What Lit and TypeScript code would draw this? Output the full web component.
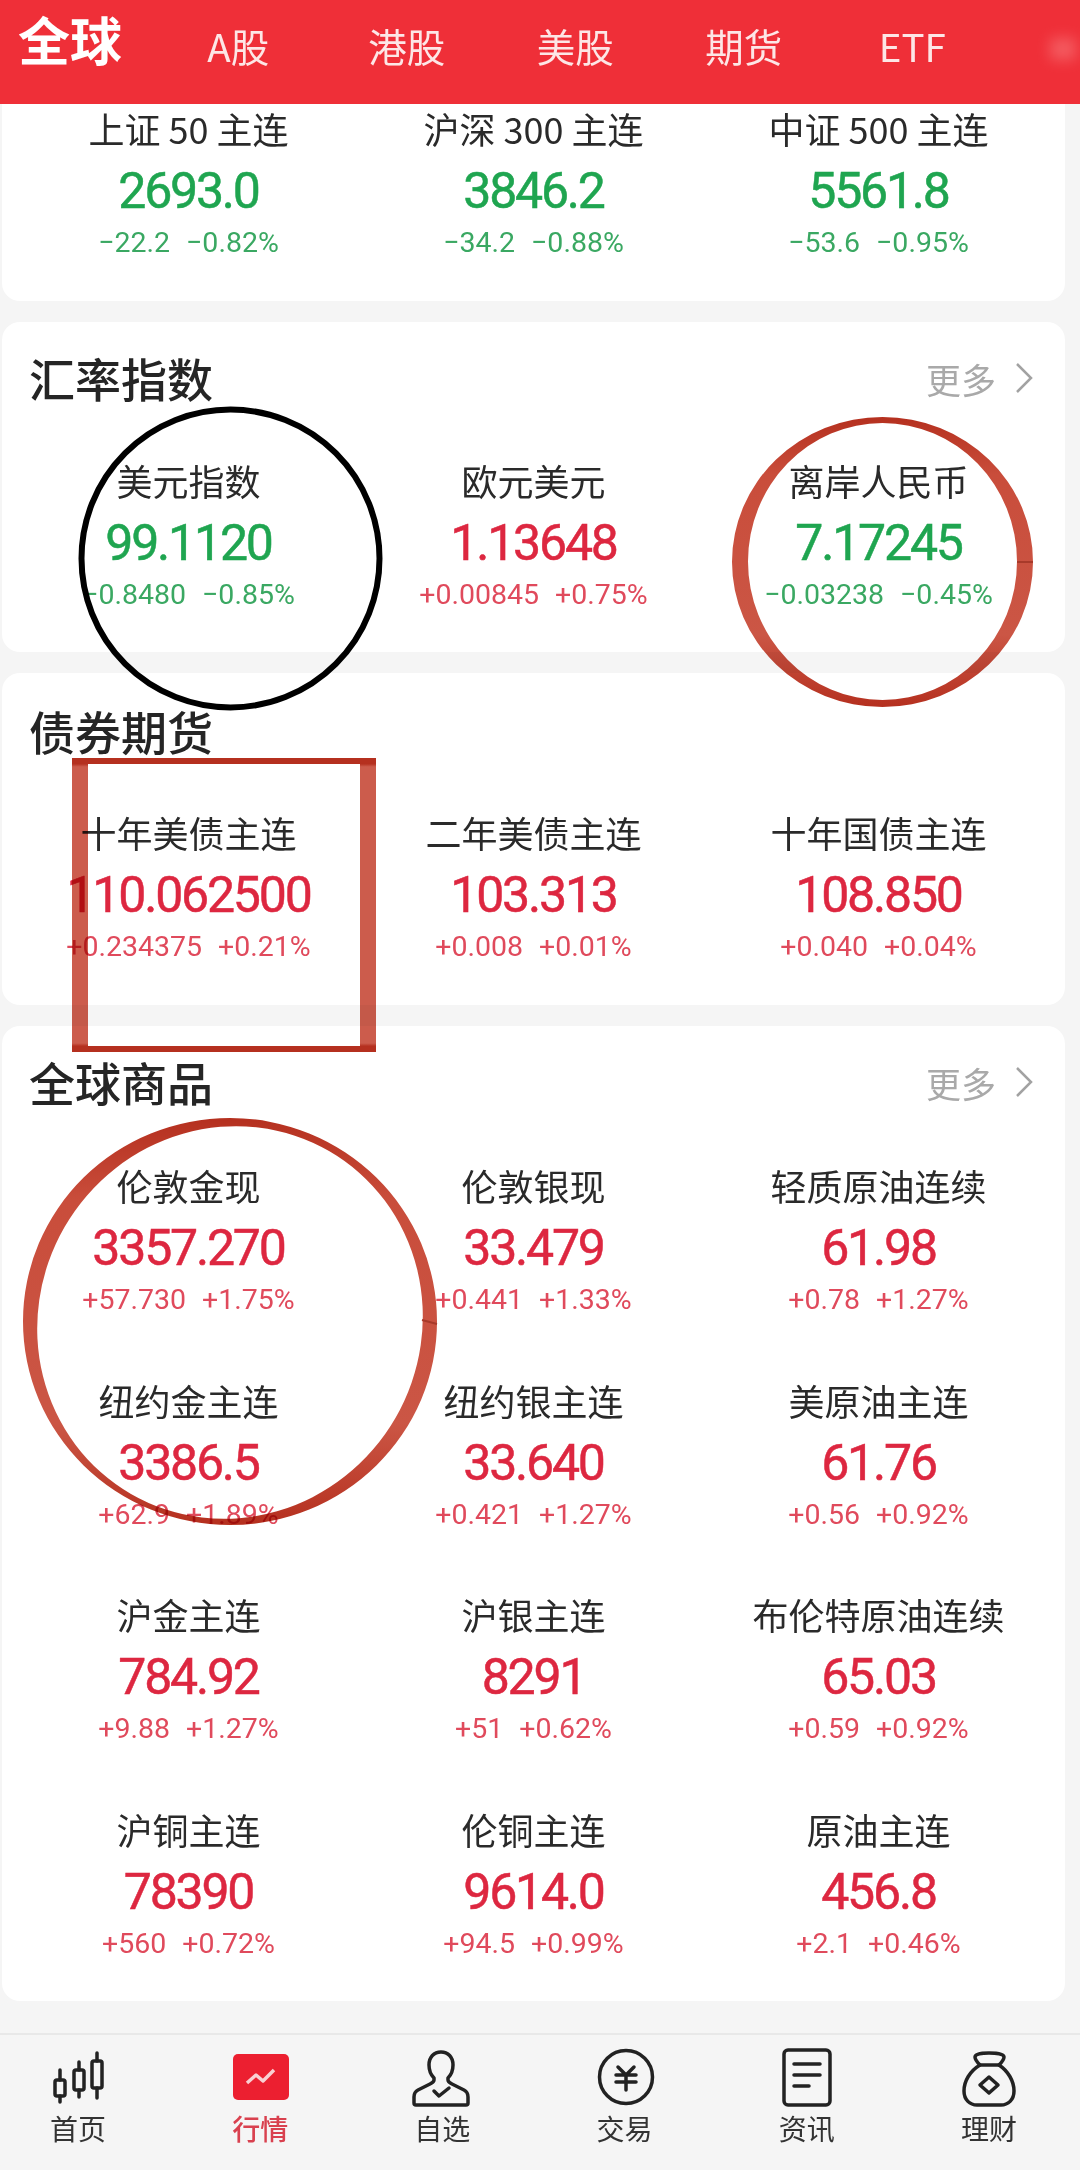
import { LitElement, html, css, svg } from "lit";
import { customElement } from "lit/decorators.js";

type Q = [string, string, string, string];

const futures: Q[] = [
  ["上证 50 主连", "2693.0", "−22.2", "−0.82%"],
  ["沪深 300 主连", "3846.2", "−34.2", "−0.88%"],
  ["中证 500 主连", "5561.8", "−53.6", "−0.95%"],
];
const fx: Q[] = [
  ["美元指数", "99.1120", "−0.8480", "−0.85%"],
  ["欧元美元", "1.13648", "+0.00845", "+0.75%"],
  ["离岸人民币", "7.17245", "−0.03238", "−0.45%"],
];
const bonds: Q[] = [
  ["十年美债主连", "110.062500", "+0.234375", "+0.21%"],
  ["二年美债主连", "103.313", "+0.008", "+0.01%"],
  ["十年国债主连", "108.850", "+0.040", "+0.04%"],
];
const goods: Q[] = [
  ["伦敦金现", "3357.270", "+57.730", "+1.75%"],
  ["伦敦银现", "33.479", "+0.441", "+1.33%"],
  ["轻质原油连续", "61.98", "+0.78", "+1.27%"],
  ["纽约金主连", "3386.5", "+62.9", "+1.89%"],
  ["纽约银主连", "33.640", "+0.421", "+1.27%"],
  ["美原油主连", "61.76", "+0.56", "+0.92%"],
  ["沪金主连", "784.92", "+9.88", "+1.27%"],
  ["沪银主连", "8291", "+51", "+0.62%"],
  ["布伦特原油连续", "65.03", "+0.59", "+0.92%"],
  ["沪铜主连", "78390", "+560", "+0.72%"],
  ["伦铜主连", "9614.0", "+94.5", "+0.99%"],
  ["原油主连", "456.8", "+2.1", "+0.46%"],
];

const icons = {
  home: svg`<path d="M12 22v10M12 48v6M31 14v8M31 42v7M49 5v8M49 40v10"/><rect x="7" y="32" width="10" height="16" rx="2"/><rect x="26" y="22" width="10" height="20" rx="2"/><rect x="44" y="13" width="10" height="27" rx="2"/>`,
  market: svg`<rect class="fill" x="3" y="6" width="56" height="46" rx="5"/><path class="spark" d="M17 35l9-8 7 6 11-11"/>`,
  person: svg`<path d="M29 4c-7 0-12 5-12 13 0 6 2 10 5 13v2c0 2-2 3-4 4l-12 6c-3 1.500-4 4-4 7v6q0 2 2 2h50q2 0 2-2v-6c0-3-1-5.500-4-7l-12-6c-2-1-4-2-4-4v-2c3-3 5-7 5-13 0-8-5-13-12-13z"/><path d="M22 43l5 5 10-8"/>`,
  trade: svg`<circle cx="31" cy="29" r="26.500"/><path d="M23 19l8 8 8-8M21 27h20M21 34h20M31 27v15"/>`,
  news: svg`<rect x="7" y="2" width="46" height="55" rx="4"/><path d="M17 16h26M17 27h26M17 38h15"/>`,
  bag: svg`<path d="M21 17c-3-3-5-5-5-8 0-3 7-4 14-4s15 1 15 4c0 3-2 5-5 8z"/><path d="M21 17C11 23 5 33 5 43c0 9 6 14 13 14h24c7 0 13-5 13-14 0-10-6-20-15-26"/><path d="M30 29l9 8-9 8-9-8z"/>`,
};

const navItems: [keyof typeof icons, string][] = [
  ["home", "首页"],
  ["market", "行情"],
  ["person", "自选"],
  ["trade", "交易"],
  ["news", "资讯"],
  ["bag", "理财"],
];

@customElement("app-root")
export class AppRoot extends LitElement {
  static styles = css`
    :host {
      display: block;
      position: relative;
      width: 1080px;
      height: 2170px;
      overflow: hidden;
      background: #f5f5f5;
      font-family: "Noto Sans CJK SC", "Noto Sans", sans-serif;
      color: #252525;
    }
    .header {
      position: relative;
      display: flex;
      align-items: flex-start;
      height: 104px;
      padding-left: 18px;
      box-sizing: border-box;
      background: #ef2f38;
      color: #fff;
    }
    .brand {
      width: 104px;
      margin-top: 9px;
      font-size: 52px;
      line-height: 60px;
      font-weight: 700;
      white-space: nowrap;
    }
    .tabs {
      display: grid;
      grid-template-columns: repeat(5, 168.500px);
      margin: 20px 0 0 32px;
    }
    .tab {
      text-align: center;
      font-size: 38.500px;
      line-height: 50px;
      color: #fde6e6;
      white-space: nowrap;
    }
    .blob {
      position: absolute;
      right: 4px;
      top: 38px;
      width: 26px;
      height: 22px;
      background: #f7777a;
      opacity: 0.6;
      filter: blur(7px);
    }
    .cards {
      display: flex;
      flex-direction: column;
      gap: 21px;
    }
    .card {
      box-sizing: border-box;
      width: 1063px;
      margin-left: 2px;
      padding: 0 14px;
      background: #fff;
      border-radius: 18px;
    }
    .first {
      height: 197px;
      padding-top: 1px;
      border-radius: 0 0 18px 18px;
    }
    .fx {
      height: 330px;
      padding-top: 26px;
    }
    .bonds {
      height: 332px;
      padding-top: 28px;
    }
    .goods {
      height: 975px;
      padding-top: 26px;
    }
    .head {
      display: flex;
      align-items: center;
      justify-content: space-between;
      height: 60px;
      padding: 0 17px 0 13px;
    }
    .title {
      font-size: 46px;
      line-height: 58px;
      height: 60px;
      font-weight: 500;
    }
    .more {
      display: flex;
      align-items: center;
      gap: 18px;
      font-size: 35px;
      color: #a9a9a9;
    }
    .more svg {
      width: 20px;
      height: 34px;
      fill: none;
      stroke: #a2a2a2;
      stroke-width: 2.500;
    }
    .grid {
      display: grid;
      grid-template-columns: repeat(3, 345px);
    }
    .fx .grid {
      margin-top: 49px;
    }
    .bonds .grid {
      margin-top: 48px;
    }
    .goods .grid {
      margin-top: 50px;
      grid-auto-rows: 214.670px;
    }
    .item {
      display: flex;
      flex-direction: column;
      align-items: center;
      white-space: nowrap;
    }
    .name {
      height: 50px;
      font-size: 36px;
      line-height: 46px;
      color: #2a2a2a;
    }
    .value {
      height: 72px;
      font-family: Roboto, "Liberation Sans", sans-serif;
      font-size: 50px;
      line-height: 73px;
      font-weight: 400;
      letter-spacing: -2.200px;
      -webkit-text-stroke: 0.500px currentColor;
    }
    .change {
      display: flex;
      gap: 16px;
      height: 32px;
      font-family: Roboto, "Liberation Sans", sans-serif;
      font-size: 28.500px;
      line-height: 32px;
    }
    .up .value {
      color: #dd2740;
    }
    .up .change {
      color: #e04a5c;
    }
    .down .value {
      color: #1fa550;
    }
    .down .change {
      color: #3aa862;
    }
    .nav {
      display: flex;
      justify-content: space-between;
      box-sizing: border-box;
      height: 137px;
      margin-top: 32px;
      padding: 13px 31px 0 18px;
      border-top: 2px solid #e8e8e8;
    }
    .nav-item {
      display: flex;
      flex-direction: column;
      align-items: center;
      width: 120px;
      font-size: 28px;
      line-height: 38px;
      color: #333;
    }
    .nav-item svg {
      width: 60px;
      height: 60px;
      fill: none;
      stroke: #222;
      stroke-width: 3.500;
      stroke-linejoin: round;
      stroke-linecap: round;
      margin-bottom: 1px;
    }
    .nav-item .fill {
      fill: #ec1f30;
      stroke: none;
    }
    .nav-item .spark {
      stroke: #f9cfd2;
      stroke-width: 3.500;
      stroke-linecap: butt;
    }
    .active {
      color: #d9414f;
      font-weight: 500;
    }
    .marks {
      position: absolute;
      left: 0;
      top: 0;
      width: 1080px;
      height: 2170px;
      pointer-events: none;
    }
    .red {
      mix-blend-mode: multiply;
    }
  `;

  private cell(q: Q) {
    const dir = q[2].startsWith("+") ? "up" : "down";
    return html`<div class="item ${dir}">
      <div class="name">${q[0]}</div>
      <div class="value">${q[1]}</div>
      <div class="change"><span>${q[2]}</span><span>${q[3]}</span></div>
    </div>`;
  }

  private head(title: string, more: boolean) {
    return html`<div class="head">
      <div class="title">${title}</div>
      ${more
        ? html`<div class="more">
            <span>更多</span>
            <svg viewBox="0 0 20 34"><path d="M3 3l14 14L3 31" /></svg>
          </div>`
        : ""}
    </div>`;
  }

  render() {
    return html`
      <div class="header">
        <div class="brand">全球</div>
        <div class="tabs">
          ${["A股", "港股", "美股", "期货", "ETF"].map(
            (t) => html`<div class="tab">${t}</div>`
          )}
        </div>
        <div class="blob"></div>
      </div>
      <div class="cards">
        <section class="card first">
          <div class="grid">${futures.map((q) => this.cell(q))}</div>
        </section>
        <section class="card fx">
          ${this.head("汇率指数", true)}
          <div class="grid">${fx.map((q) => this.cell(q))}</div>
        </section>
        <section class="card bonds">
          ${this.head("债券期货", false)}
          <div class="grid">${bonds.map((q) => this.cell(q))}</div>
        </section>
        <section class="card goods">
          ${this.head("全球商品", true)}
          <div class="grid">${goods.map((q) => this.cell(q))}</div>
        </section>
      </div>
      <nav class="nav">
        ${navItems.map(
          ([icon, label]) => html`<div
            class="nav-item ${icon === "market" ? "active" : ""}"
          >
            <svg viewBox="0 0 60 60">${icons[icon]}</svg>
            <span>${label}</span>
          </div>`
        )}
      </nav>
      <svg class="marks" viewBox="0 0 1080 2170">
        <defs>
          <linearGradient id="ink" x1="0" y1="0" x2="0" y2="1">
            <stop offset="0" stop-color="#b5301f" />
            <stop offset="0.2" stop-color="#c94d3b" />
            <stop offset="0.75" stop-color="#cb5645" />
            <stop offset="1" stop-color="#b5301f" />
          </linearGradient>
          <linearGradient id="bar" x1="0" y1="0" x2="0" y2="1">
            <stop offset="0" stop-color="#b5301f" />
            <stop offset="0.02" stop-color="#b5301f" />
            <stop offset="0.03" stop-color="#cc5c4c" />
            <stop offset="0.97" stop-color="#cc5c4c" />
            <stop offset="0.98" stop-color="#b5301f" />
            <stop offset="1" stop-color="#b5301f" />
          </linearGradient>
        </defs>
        <ellipse cx="230.500" cy="558.500" rx="149" ry="149" fill="none" stroke="#000" stroke-width="6" />
        <g class="red">
          <path
            fill="url(#ink)"
            fill-rule="evenodd"
            d="M732 562a150.500 145 0 1 0 301 0a150.500 145 0 1 0-301 0zM748 561.500a134.500 138.500 0 1 0 269 0a134.500 138.500 0 1 0-269 0z"
          />
          <path
            fill="url(#bar)"
            fill-rule="evenodd"
            d="M72 758h304v294H72zM88 764v282h272V764z"
          />
          <path
            fill="url(#ink)"
            fill-rule="evenodd"
            d="M23 1321.500a207 203.500 0 1 0 414 0a207 203.500 0 1 0-414 0zM131 1494A198 191-60 1 0 329 1151A198 191-60 1 0 131 1494z"
          />
          <path d="M422 1320l15 4" stroke="#a83a2a" stroke-width="2" fill="none" />
          <path d="M1017 562h16" stroke="#a83a2a" stroke-width="2" fill="none" />
        </g>
      </svg>
    `;
  }
}
